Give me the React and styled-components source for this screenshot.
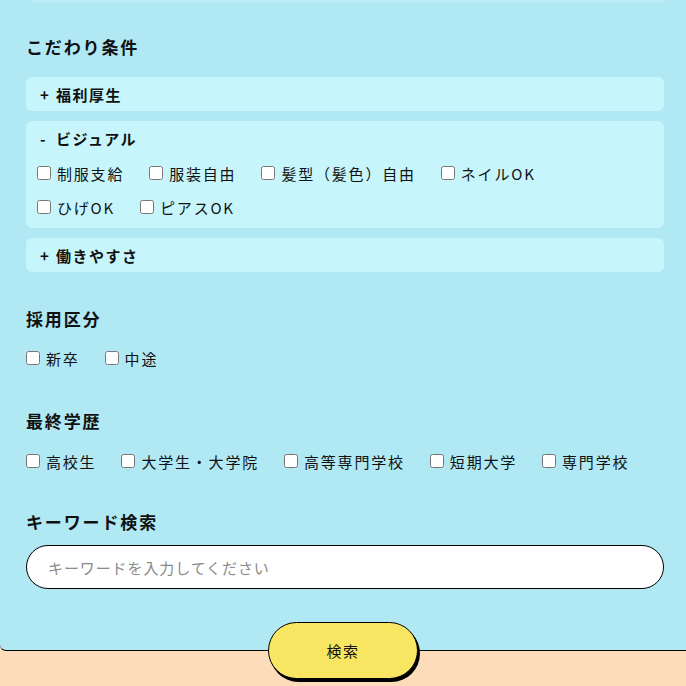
import styled, { createGlobalStyle } from "styled-components"

const GlobalStyle = createGlobalStyle`
  body {
    margin: 0;
    background: #fddcbc;
    font-family: "Noto Sans CJK JP", "Noto Sans", sans-serif;
    color: #111;
  }
`

const SearchArea = styled.div`
  background: #b0e8f4;
  border-bottom: 1px solid #000;
  border-bottom-left-radius: 6px;
  padding: 0 22px 61px 26px;
`

const PrevCard = styled.div`
  height: 3px;
  margin: 0 -1px 0 6px;
  background: #bdeef8;
  border-radius: 0 0 6px 6px;
`

const Heading = styled.h2`
  margin: ${(p) => p.$top}px 0 0;
  font-size: 17px;
  line-height: 24px;
  font-weight: bold;
  letter-spacing: 0.11em;
`

const AccordionList = styled.div`
  display: flex;
  flex-direction: column;
  gap: 10px;
  margin-top: 18px;
`

const AccordionItem = styled.div`
  background: #c6f6fc;
  border-radius: 6px;
  padding: 0 11px ${(p) => (p.$open ? 4 : 0)}px;
`

const AccordionHead = styled.div`
  display: flex;
  align-items: center;
  height: ${(p) => (p.$open ? 35 : 34)}px;
  font-size: 15px;
  font-weight: bold;
  letter-spacing: 0.1em;
`

const Sign = styled.span`
  width: 16px;
  padding-left: 3px;
`

const Row = styled.div`
  display: flex;
  flex-wrap: wrap;
  align-items: center;
  column-gap: 25px;
  height: ${(p) => p.$h}px;
  margin-top: ${(p) => p.$top || 0}px;
`

const CheckItem = styled.label`
  display: inline-flex;
  align-items: center;
  gap: 6px;
  font-size: 15px;
  letter-spacing: 0.12em;
  cursor: pointer;

  input {
    width: 14px;
    height: 14px;
    margin: 0;
  }
`

const KeywordInput = styled.input`
  display: block;
  box-sizing: border-box;
  width: 100%;
  height: 44px;
  margin-top: 11px;
  padding: 0 21px;
  border: 1px solid #000;
  border-radius: 22px;
  background: #fff;
  font-family: inherit;
  font-size: 15px;
  letter-spacing: 0.06em;
  outline: none;

  &::placeholder {
    color: #8a8a8a;
  }
`

const Footer = styled.div`
  min-height: 60px;
  background: #fddcbc;
  display: flex;
  justify-content: center;
`

const SearchButton = styled.button`
  width: 150px;
  height: 57px;
  margin-top: -29px;
  border: 1.5px solid #000;
  border-radius: 29px;
  background: #f8e662;
  box-shadow: 2px 3px 0 #000;
  font-family: inherit;
  font-size: 15px;
  letter-spacing: 0.1em;
  color: #111;
  cursor: pointer;
`

const Check = ({ label }) => (
  <CheckItem>
    <input type="checkbox" />
    {label}
  </CheckItem>
)

const Accordion = ({ title, open, rows }) => (
  <AccordionItem $open={open}>
    <AccordionHead $open={open}>
      <Sign>{open ? "-" : "+"}</Sign>
      {title}
    </AccordionHead>
    {open &&
      rows.map((row, i) => (
        <Row key={i} $h={34}>
          {row.map((l) => (
            <Check key={l} label={l} />
          ))}
        </Row>
      ))}
  </AccordionItem>
)

const App = () => {
  return (
    <>
      <GlobalStyle />
      <SearchArea>
        <PrevCard />
        <Heading $top={32}>こだわり条件</Heading>
        <AccordionList>
          <Accordion title="福利厚生" />
          <Accordion
            title="ビジュアル"
            open
            rows={[
              ["制服支給", "服装自由", "髪型（髪色）自由", "ネイルOK"],
              ["ひげOK", "ピアスOK"],
            ]}
          />
          <Accordion title="働きやすさ" />
        </AccordionList>

        <Heading $top={35}>採用区分</Heading>
        <Row $h={24} $top={15}>
          <Check label="新卒" />
          <Check label="中途" />
        </Row>

        <Heading $top={39}>最終学歴</Heading>
        <Row $h={24} $top={16}>
          <Check label="高校生" />
          <Check label="大学生・大学院" />
          <Check label="高等専門学校" />
          <Check label="短期大学" />
          <Check label="専門学校" />
        </Row>

        <Heading $top={37}>キーワード検索</Heading>
        <KeywordInput placeholder="キーワードを入力してください" />
      </SearchArea>
      <Footer>
        <SearchButton>検索</SearchButton>
      </Footer>
    </>
  )
}

export default App
